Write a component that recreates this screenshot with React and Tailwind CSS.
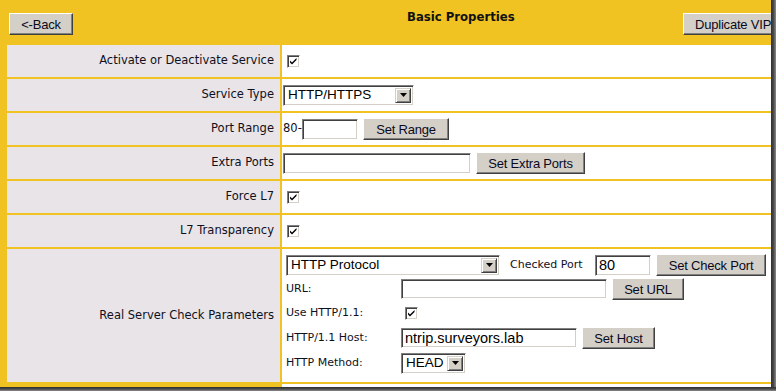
import React from "react";

const btnCls =
  "bg-[#d4d0c8] border border-t-white border-l-white border-r-[#404040] border-b-[#404040] shadow-[inset_-1px_-1px_0_#808080] font-['Liberation_Sans'] text-[13px] text-[#0a0a1e] leading-none flex items-center justify-center tracking-[-0.2px] shrink-0";

const sunken =
  "bg-white border border-t-[#808080] border-l-[#808080] border-r-white border-b-white shadow-[inset_1px_1px_0_#404040,inset_-1px_-1px_0_#d4d0c8] shrink-0";

function Btn({ children, className = "" }) {
  return <div className={`${btnCls} ${className}`}>{children}</div>;
}

function Input({ value = "", className = "" }) {
  return (
    <div className={`${sunken} ${className} flex items-center pl-[3px] font-['Liberation_Sans'] text-[14.5px] text-black leading-none overflow-hidden whitespace-nowrap`}>
      {value}
    </div>
  );
}

function Select({ value, className = "" }) {
  return (
    <div className={`${sunken} ${className} flex items-center p-[2px]`}>
      <div className="flex-1 pl-[2px] font-['Liberation_Sans'] text-[13.5px] text-black leading-none whitespace-nowrap overflow-hidden">
        {value}
      </div>
      <div className="w-[16px] h-full bg-[#d4d0c8] border border-t-[#d4d0c8] border-l-[#d4d0c8] border-r-[#404040] border-b-[#404040] shadow-[inset_1px_1px_0_#fff,inset_-1px_-1px_0_#808080] flex items-center justify-center">
        <svg width="7" height="4" viewBox="0 0 7 4">
          <path d="M0 0H7L3.5 4Z" fill="#000" />
        </svg>
      </div>
    </div>
  );
}

function Check({ className = "" }) {
  return (
    <div className={`w-[13px] h-[13px] ${sunken} flex items-center justify-center ${className}`}>
      <svg width="9" height="9" viewBox="0 0 9 9">
        <path d="M1 3.5L3 5.5L7.5 1V3L3 7.5L1 5.5Z" fill="#000" />
      </svg>
    </div>
  );
}

function Row({ label, children, h = "h-[32px]" }) {
  return (
    <div className={`flex gap-[2px] ${h}`}>
      <div className="w-[273px] shrink-0 bg-[#e8e4e8] flex items-center justify-end pr-[6px] text-[11.5px] text-[#10101c] whitespace-nowrap">
        {label}
      </div>
      <div className="flex-1 bg-white flex items-center overflow-hidden text-[11.5px] text-[#10101c]">
        {children}
      </div>
    </div>
  );
}

export default function App() {
  return (
    <div className="w-[776px] h-[391px] flex flex-col overflow-hidden bg-[#3a3a3a] font-['DejaVu_Sans',sans-serif]">
      <div className="flex h-[387px]">
        <div className="w-[771px] h-[387px] bg-[#f0c322] overflow-hidden flex flex-col">
          {/* header */}
          <div className="h-[45px] flex items-start pt-[13px] shrink-0">
            <Btn className="ml-[9px] w-[64px] h-[22px]">&lt;-Back</Btn>
            <div className="w-[610px] shrink-0 pl-[334px] mt-[-4px] font-bold text-[11.7px] text-[#111] whitespace-nowrap">
              Basic Properties
            </div>
            <Btn className="w-[100px] h-[22px] justify-start pl-[11px] whitespace-nowrap text-[13.5px]">
              Duplicate VIP
            </Btn>
          </div>
          {/* table */}
          <div className="flex flex-col gap-[2px] pl-[7px]">
            <Row label="Activate or Deactivate Service">
              <Check className="ml-[5px]" />
            </Row>
            <Row label="Service Type">
              <Select value="HTTP/HTTPS" className="ml-[1px] w-[131px] h-[21px]" />
            </Row>
            <Row label="Port Range">
              <span className="ml-[1px] w-[19px] shrink-0">80-</span>
              <Input className="w-[56px] h-[21px]" />
              <Btn className="ml-[5px] w-[86px] h-[22px]">Set Range</Btn>
            </Row>
            <Row label="Extra Ports">
              <Input className="ml-[1px] w-[188px] h-[21px]" />
              <Btn className="ml-[5px] w-[109px] h-[22px]">Set Extra Ports</Btn>
            </Row>
            <Row label="Force L7">
              <Check className="ml-[5px]" />
            </Row>
            <Row label="L7 Transparency">
              <Check className="ml-[5px]" />
            </Row>
            <Row label="Real Server Check Parameters" h="h-[133px]">
              <div className="self-stretch flex flex-col pl-[4px] pt-[5px] text-[11px]">
                <div className="flex items-center h-[22px] mb-[2px]">
                  <Select value="HTTP Protocol" className="w-[214px] h-[21px]" />
                  <span className="ml-[10px] w-[85px] shrink-0 whitespace-nowrap">Checked Port</span>
                  <Input value="80" className="w-[56px] h-[21px]" />
                  <Btn className="ml-[5px] w-[110px] h-[22px]">Set Check Port</Btn>
                </div>
                <div className="flex flex-col gap-[2.7px]">
                  <div className="flex items-center h-[22px]">
                    <span className="w-[115px] shrink-0">URL:</span>
                    <Input className="w-[206px] h-[20px]" />
                    <Btn className="ml-[5px] w-[72px] h-[22px]">Set URL</Btn>
                  </div>
                  <div className="flex items-center h-[22px]">
                    <span className="w-[115px] shrink-0">Use HTTP/1.1:</span>
                    <Check className="ml-[4px]" />
                  </div>
                  <div className="flex items-center h-[22px]">
                    <span className="w-[115px] shrink-0">HTTP/1.1 Host:</span>
                    <Input value="ntrip.surveyors.lab" className="w-[176px] h-[20px]" />
                    <Btn className="ml-[5px] w-[73px] h-[22px]">Set Host</Btn>
                  </div>
                  <div className="flex items-center h-[22px]">
                    <span className="w-[115px] shrink-0">HTTP Method:</span>
                    <Select value="HEAD" className="w-[65px] h-[21px]" />
                  </div>
                </div>
              </div>
            </Row>
            <div className="h-[10px] bg-white ml-[275px]" />
          </div>
        </div>
        <div className="w-[5px] h-full bg-[linear-gradient(to_right,#2e2e2e,#4a4a4a,#8a8a8a)]" />
      </div>
      <div className="h-[4px] bg-[linear-gradient(to_bottom,#2e2e2e,#4a4a4a,#8a8a8a)]" />
    </div>
  );
}
